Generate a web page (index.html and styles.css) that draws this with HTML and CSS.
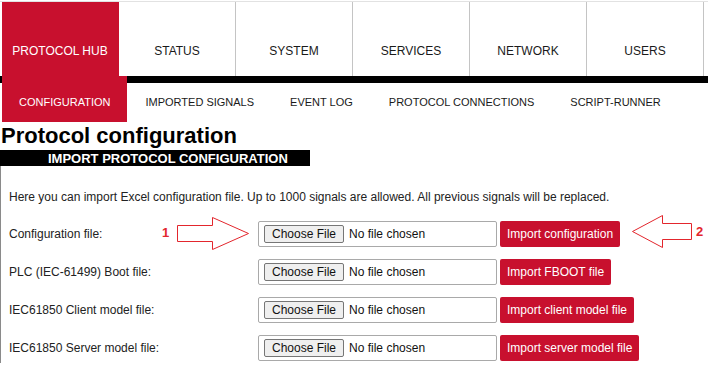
FILE: index.html
```html
<!DOCTYPE html>
<html>
<head>
<meta charset="utf-8">
<link rel="stylesheet" href="styles.css">
</head>
<body>
<nav class="topnav">
  <a class="tab active">PROTOCOL HUB</a>
  <a class="tab">STATUS</a>
  <a class="tab">SYSTEM</a>
  <a class="tab">SERVICES</a>
  <a class="tab">NETWORK</a>
  <a class="tab">USERS</a>
</nav>
<div class="bar"></div>
<nav class="subnav">
  <a class="sub active">CONFIGURATION</a>
  <a class="sub">IMPORTED SIGNALS</a>
  <a class="sub">EVENT LOG</a>
  <a class="sub">PROTOCOL CONNECTIONS</a>
  <a class="sub">SCRIPT-RUNNER</a>
</nav>
<h1 class="title">Protocol configuration</h1>
<div class="section-head">IMPORT PROTOCOL CONFIGURATION</div>
<div class="section">
  <p class="intro">Here you can import Excel configuration file. Up to 1000 signals are allowed. All previous signals will be replaced.</p>
  <div class="row">
    <span class="label">Configuration file:</span>
    <input class="file" type="file">
    <button class="import">Import configuration</button>
  </div>
  <div class="row">
    <span class="label">PLC (IEC-61499) Boot file:</span>
    <input class="file" type="file">
    <button class="import">Import FBOOT file</button>
  </div>
  <div class="row">
    <span class="label">IEC61850 Client model file:</span>
    <input class="file" type="file">
    <button class="import">Import client model file</button>
  </div>
  <div class="row">
    <span class="label">IEC61850 Server model file:</span>
    <input class="file" type="file">
    <button class="import">Import server model file</button>
  </div>
</div>
<svg class="annot" width="708" height="383" viewBox="0 0 708 383">
  <polygon points="177.5,225.5 212.5,225.5 212.5,217.5 248.5,233.5 212.5,249.5 212.5,241.5 177.5,241.5" fill="none" stroke="#e3262d" stroke-width="1"/>
  <polygon points="632.5,231.5 662.5,215.5 662.5,223.5 691.5,223.5 691.5,239.5 662.5,239.5 662.5,247.5" fill="none" stroke="#e3262d" stroke-width="1"/>
  <text x="162" y="237" class="num">1</text>
  <text x="696" y="236" class="num">2</text>
</svg>
</body>
</html>
```
FILE: styles.css
```css
html, body {
  margin: 0;
  padding: 0;
  background: #fff;
}
body {
  font-family: Arial, "Liberation Sans", sans-serif;
  color: #222;
  position: relative;
  width: 708px;
  height: 383px;
  overflow: hidden;
}
.topnav {
  display: flex;
  margin-top: 1px;
  border-top: 1px solid #e2e2e2;
  padding-left: 2px;
  height: 74px;
}
.tab {
  width: 116px;
  border-right: 1px solid #c4c4c4;
  display: flex;
  align-items: center;
  justify-content: center;
  padding-top: 24px;
  box-sizing: border-box;
  width: 117px;
  font-size: 12px;
  color: #1a1a1a;
}
.tab.active {
  background: #c8102e;
  color: #fff;
  border-right-color: #c8102e;
}
.bar {
  height: 7px;
  background: #000;
}
.subnav {
  display: flex;
  margin-top: -7px;
  padding-left: 2px;
  height: 46px;
}
.sub {
  display: flex;
  align-items: center;
  padding: 6px 18px 0 18px;
  font-size: 11px;
  color: #1a1a1a;
}
.sub.active {
  background: #c8102e;
  color: #fff;
  padding: 6px 17px 0 17px;
}
.title {
  margin: 0;
  padding-left: 1px;
  font-size: 22px;
  font-weight: bold;
  line-height: 28px;
  height: 28px;
  color: #000;
}
.section-head {
  width: 262px;
  padding-left: 48px;
  height: 16px;
  line-height: 17px;
  background: #000;
  color: #fff;
  font-size: 13px;
  font-weight: bold;
}
.section {
  border-left: 1px solid #8a8a8a;
  padding: 24px 0 2px 8px;
  margin: 0;
}
.intro {
  margin: 0 0 17px 0;
  font-size: 12px;
  line-height: 14px;
}
.row {
  display: grid;
  grid-template-columns: 246px 239px auto;
  column-gap: 3px;
  align-items: center;
  height: 26px;
  margin-bottom: 12px;
}
.row:last-child {
  margin-bottom: 0;
}
.label {
  font-size: 12px;
}
.file {
  width: 239px;
  height: 26px;
  box-sizing: border-box;
  border: 1px solid #a9a9a9;
  border-radius: 2px;
  padding: 3px 5px;
  font-family: Arial, "Liberation Sans", sans-serif;
  font-size: 12px;
  color: #111;
  background: #fff;
}
.file::file-selector-button {
  font-family: Arial, "Liberation Sans", sans-serif;
  font-size: 12px;
  height: 18px;
  padding: 0 7px;
  margin-right: 5px;
  border: 1px solid #767676;
  border-radius: 2px;
  background: #efefef;
  color: #111;
}
.import {
  justify-self: start;
  height: 26px;
  border: none;
  border-radius: 2px;
  background: #c8102e;
  color: #fff;
  font-family: Arial, "Liberation Sans", sans-serif;
  font-size: 12px;
  padding: 0 7px;
}
.annot {
  position: absolute;
  left: 0;
  top: 0;
  pointer-events: none;
}
.num {
  fill: #e3262d;
  font-family: Arial, "Liberation Sans", sans-serif;
  font-size: 13px;
  font-weight: bold;
}
```
